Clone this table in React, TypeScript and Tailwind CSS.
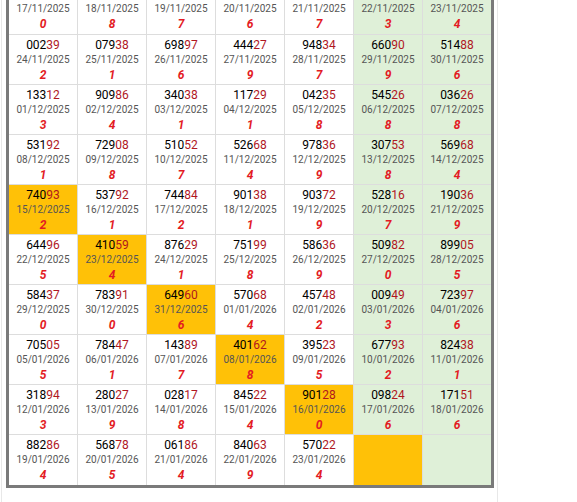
import React from "react";

type Cell = { n?: string; d?: string; k?: string; y?: boolean };

const rows: Cell[][] = [
  [
    { d: "17/11/2025", k: "0" },
    { d: "18/11/2025", k: "8" },
    { d: "19/11/2025", k: "7" },
    { d: "20/11/2025", k: "6" },
    { d: "21/11/2025", k: "7" },
    { d: "22/11/2025", k: "3" },
    { d: "23/11/2025", k: "4" },
  ],
  [
    { n: "00239", d: "24/11/2025", k: "2" },
    { n: "07938", d: "25/11/2025", k: "1" },
    { n: "69897", d: "26/11/2025", k: "6" },
    { n: "44427", d: "27/11/2025", k: "9" },
    { n: "94834", d: "28/11/2025", k: "7" },
    { n: "66090", d: "29/11/2025", k: "9" },
    { n: "51488", d: "30/11/2025", k: "6" },
  ],
  [
    { n: "13312", d: "01/12/2025", k: "3" },
    { n: "90986", d: "02/12/2025", k: "4" },
    { n: "34038", d: "03/12/2025", k: "1" },
    { n: "11729", d: "04/12/2025", k: "1" },
    { n: "04235", d: "05/12/2025", k: "8" },
    { n: "54526", d: "06/12/2025", k: "8" },
    { n: "03626", d: "07/12/2025", k: "8" },
  ],
  [
    { n: "53192", d: "08/12/2025", k: "1" },
    { n: "72908", d: "09/12/2025", k: "8" },
    { n: "51052", d: "10/12/2025", k: "7" },
    { n: "52668", d: "11/12/2025", k: "4" },
    { n: "97836", d: "12/12/2025", k: "9" },
    { n: "30753", d: "13/12/2025", k: "8" },
    { n: "56968", d: "14/12/2025", k: "4" },
  ],
  [
    { n: "74093", d: "15/12/2025", k: "2", y: true },
    { n: "53792", d: "16/12/2025", k: "1" },
    { n: "74484", d: "17/12/2025", k: "2" },
    { n: "90138", d: "18/12/2025", k: "1" },
    { n: "90372", d: "19/12/2025", k: "9" },
    { n: "52816", d: "20/12/2025", k: "7" },
    { n: "19036", d: "21/12/2025", k: "9" },
  ],
  [
    { n: "64496", d: "22/12/2025", k: "5" },
    { n: "41059", d: "23/12/2025", k: "4", y: true },
    { n: "87629", d: "24/12/2025", k: "1" },
    { n: "75199", d: "25/12/2025", k: "8" },
    { n: "58636", d: "26/12/2025", k: "9" },
    { n: "50982", d: "27/12/2025", k: "0" },
    { n: "89905", d: "28/12/2025", k: "5" },
  ],
  [
    { n: "58437", d: "29/12/2025", k: "0" },
    { n: "78391", d: "30/12/2025", k: "0" },
    { n: "64960", d: "31/12/2025", k: "6", y: true },
    { n: "57068", d: "01/01/2026", k: "4" },
    { n: "45748", d: "02/01/2026", k: "2" },
    { n: "00949", d: "03/01/2026", k: "3" },
    { n: "72397", d: "04/01/2026", k: "6" },
  ],
  [
    { n: "70505", d: "05/01/2026", k: "5" },
    { n: "78447", d: "06/01/2026", k: "1" },
    { n: "14389", d: "07/01/2026", k: "7" },
    { n: "40162", d: "08/01/2026", k: "8", y: true },
    { n: "39523", d: "09/01/2026", k: "5" },
    { n: "67793", d: "10/01/2026", k: "2" },
    { n: "82438", d: "11/01/2026", k: "1" },
  ],
  [
    { n: "31894", d: "12/01/2026", k: "3" },
    { n: "28027", d: "13/01/2026", k: "9" },
    { n: "02817", d: "14/01/2026", k: "8" },
    { n: "84522", d: "15/01/2026", k: "4" },
    { n: "90128", d: "16/01/2026", k: "0", y: true },
    { n: "09824", d: "17/01/2026", k: "6" },
    { n: "17151", d: "18/01/2026", k: "6" },
  ],
  [
    { n: "88286", d: "19/01/2026", k: "4" },
    { n: "56878", d: "20/01/2026", k: "5" },
    { n: "06186", d: "21/01/2026", k: "4" },
    { n: "84063", d: "22/01/2026", k: "9" },
    { n: "57022", d: "23/01/2026", k: "4" },
    { y: true },
    {},
  ],
];

function CellView({ c, col, first, last }: { c: Cell; col: number; first: boolean; last: boolean }) {
  const bg = c.y ? "bg-[#ffc107]" : col >= 5 ? "bg-[#dff0d8]" : "bg-white";
  const right = col < 6 ? "border-r" : "";
  const bottom = last ? "" : "border-b";
  return (
    <div
      className={`${bg} ${right} ${bottom} border-[#dddddd] ${first ? "h-[35px] pt-[2px]" : "h-[50px] pt-[3px]"} flex flex-col items-center overflow-hidden`}
    >
      {c.n && (
        <div className="h-[15px] leading-[15px] text-[12px] text-black">
          {c.n.slice(0, 3)}
          <span className="text-[#b0171f]">{c.n.slice(3)}</span>
        </div>
      )}
      {c.d && (
        <div className="h-[14px] leading-[14px] text-[10px] text-[#555555]">{c.d}</div>
      )}
      {c.k && (
        <div className="h-[17px] leading-[17px] text-[12px] font-bold italic text-[#e31b23]">{c.k}</div>
      )}
    </div>
  );
}

export default function App() {
  return (
    <div
      className="w-[577px] h-[502px] overflow-hidden bg-white"
      style={{ fontFamily: "Roboto, 'Noto Sans', sans-serif" }}
    >
      <div className="ml-[1px] w-[497px] h-[502px] border-x border-[#e8e8e8] pl-[4px]">
        <div className="w-[488px] bg-[#7a7a7a] px-[3px] pb-[3px]">
          <div className="grid grid-cols-[69px_69px_69px_69px_69px_69px_68px]">
            {rows.map((r, ri) =>
              r.map((c, ci) => (
                <CellView key={`${ri}-${ci}`} c={c} col={ci} first={ri === 0} last={ri === rows.length - 1} />
              ))
            )}
          </div>
        </div>
      </div>
    </div>
  );
}
